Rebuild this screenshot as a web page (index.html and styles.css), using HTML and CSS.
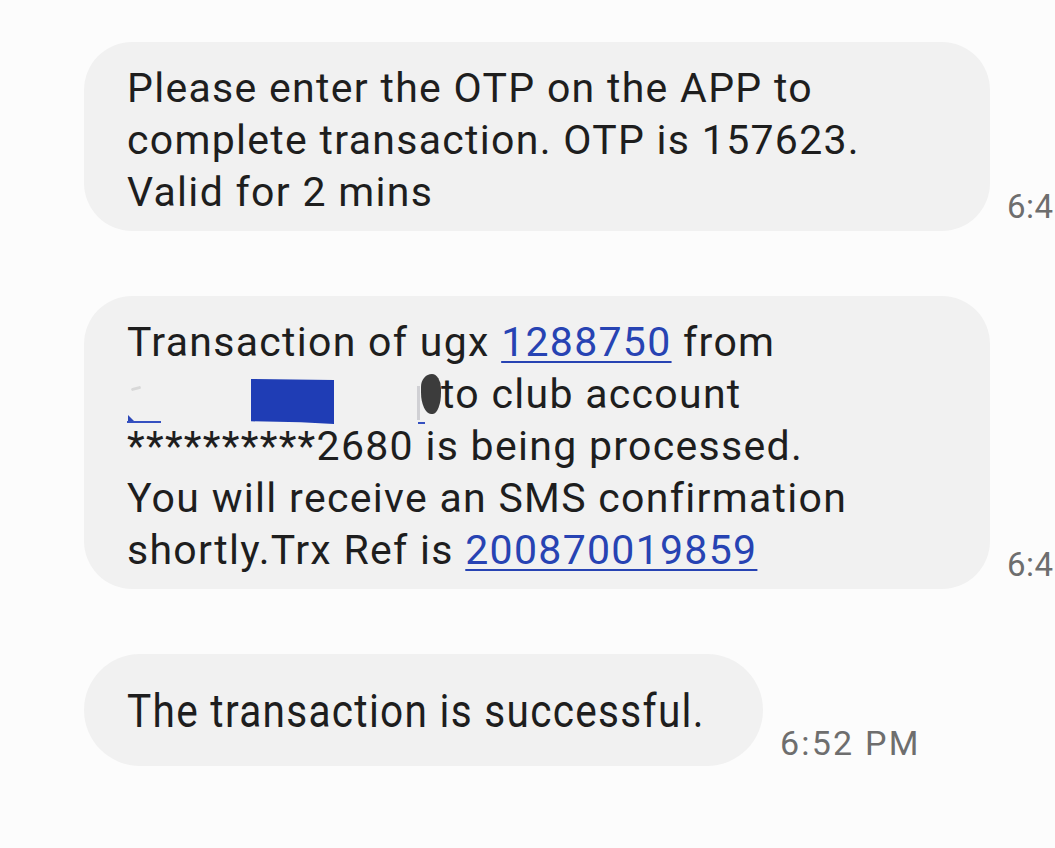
FILE: index.html
```html
<!DOCTYPE html>
<html lang="en">
<head>
<meta charset="utf-8">
<title>Messages</title>
<link rel="stylesheet" href="styles.css">
</head>
<body>
<main class="thread">
  <div class="row row-first">
    <div class="bubble bubble-wide">
      <p class="msg">Please enter the OTP on the APP to<br>complete transaction. OTP is 157623.<br>Valid for 2 mins</p>
    </div>
    <span class="time">6:4</span>
  </div>

  <div class="row">
    <div class="bubble bubble-wide">
      <p class="msg">Transaction of ugx <a class="link" href="#">1288750</a> from<br><span class="redact"><span class="mark tick"></span><span class="mark tri"></span><span class="mark uline1"></span><span class="mark box"></span><span class="mark stroke"></span><span class="mark uline2"></span><span class="mark blob"></span></span>to club account<br>**********2680 is being processed.<br>You will receive an SMS confirmation<br>shortly.Trx Ref is <a class="link" href="#">200870019859</a></p>
    </div>
    <span class="time">6:4</span>
  </div>

  <div class="row">
    <div class="bubble bubble-short">
      <p class="msg"><span class="stretch">The transaction is successful.</span></p>
    </div>
    <span class="time time-last">6:52 PM</span>
  </div>
</main>
</body>
</html>
```

FILE: styles.css
```css
html, body {
  margin: 0;
  padding: 0;
}

body {
  background: #fcfcfc;
  width: 1055px;
  height: 848px;
  overflow: hidden;
  font-family: Roboto, "Liberation Sans", sans-serif;
  color: #1e1e1e;
}

.thread {
  display: flex;
  flex-direction: column;
  gap: 65px;
  padding: 42px 0 0 84px;
}

.row {
  display: flex;
  align-items: flex-end;
  gap: 17px;
  white-space: nowrap;
}

.bubble {
  flex-shrink: 0;
  background: #f1f1f1;
  box-sizing: border-box;
}

.bubble-wide {
  width: 906px;
  border-radius: 48px;
  padding: 20px 20px 13px 43px;
}

.bubble-short {
  width: 679px;
  height: 112px;
  border-radius: 56px;
  padding: 31px 20px 29px 43px;
}

.msg {
  margin: 0;
  font-size: 41px;
  line-height: 52px;
  letter-spacing: 1.3px;
}

.link {
  color: #2743b3;
  text-decoration: underline;
  text-decoration-thickness: 2px;
  text-underline-offset: 5px;
}

.stretch {
  display: inline-block;
  transform: scale(0.99, 1.12);
  transform-origin: 0 50%;
}

.time {
  flex-shrink: 0;
  font-size: 33px;
  color: #6e6e6e;
  line-height: 40px;
  margin-bottom: 4px;
  letter-spacing: 0.5px;
}

.time-last {
  font-size: 34px;
  margin-bottom: 3px;
  letter-spacing: 2.2px;
}

/* redaction scribbles on line 2 */
.redact {
  display: inline-block;
  position: relative;
  width: 314px;
  height: 52px;
  vertical-align: top;
}

.mark {
  position: absolute;
  display: block;
}

.tick {
  left: 4px;
  top: 19px;
  width: 10px;
  height: 3px;
  background: #d8d8d8;
  border-radius: 2px;
  transform: rotate(-15deg);
}

.tri {
  left: 1px;
  top: 47px;
  width: 0;
  height: 0;
  border-left: 6px solid #2d48b8;
  border-top: 6px solid transparent;
}

.uline1 {
  left: 0;
  top: 53px;
  width: 34px;
  height: 2px;
  background: #3550c0;
}

.box {
  left: 124px;
  top: 11px;
  width: 83px;
  height: 45px;
  background: #1f3db5;
  clip-path: polygon(0 0, 100% 2%, 100% 100%, 60% 96%, 0 94%);
}

.stroke {
  left: 290px;
  top: 18px;
  width: 3px;
  height: 34px;
  background: #d0d0d4;
}

.uline2 {
  left: 291px;
  top: 54px;
  width: 7px;
  height: 2px;
  background: #3550c0;
}

.blob {
  left: 294px;
  top: 6px;
  width: 20px;
  height: 40px;
  background: #3c3c3c;
  border-radius: 60% 50% 45% 55% / 35% 40% 60% 60%;
}
```
